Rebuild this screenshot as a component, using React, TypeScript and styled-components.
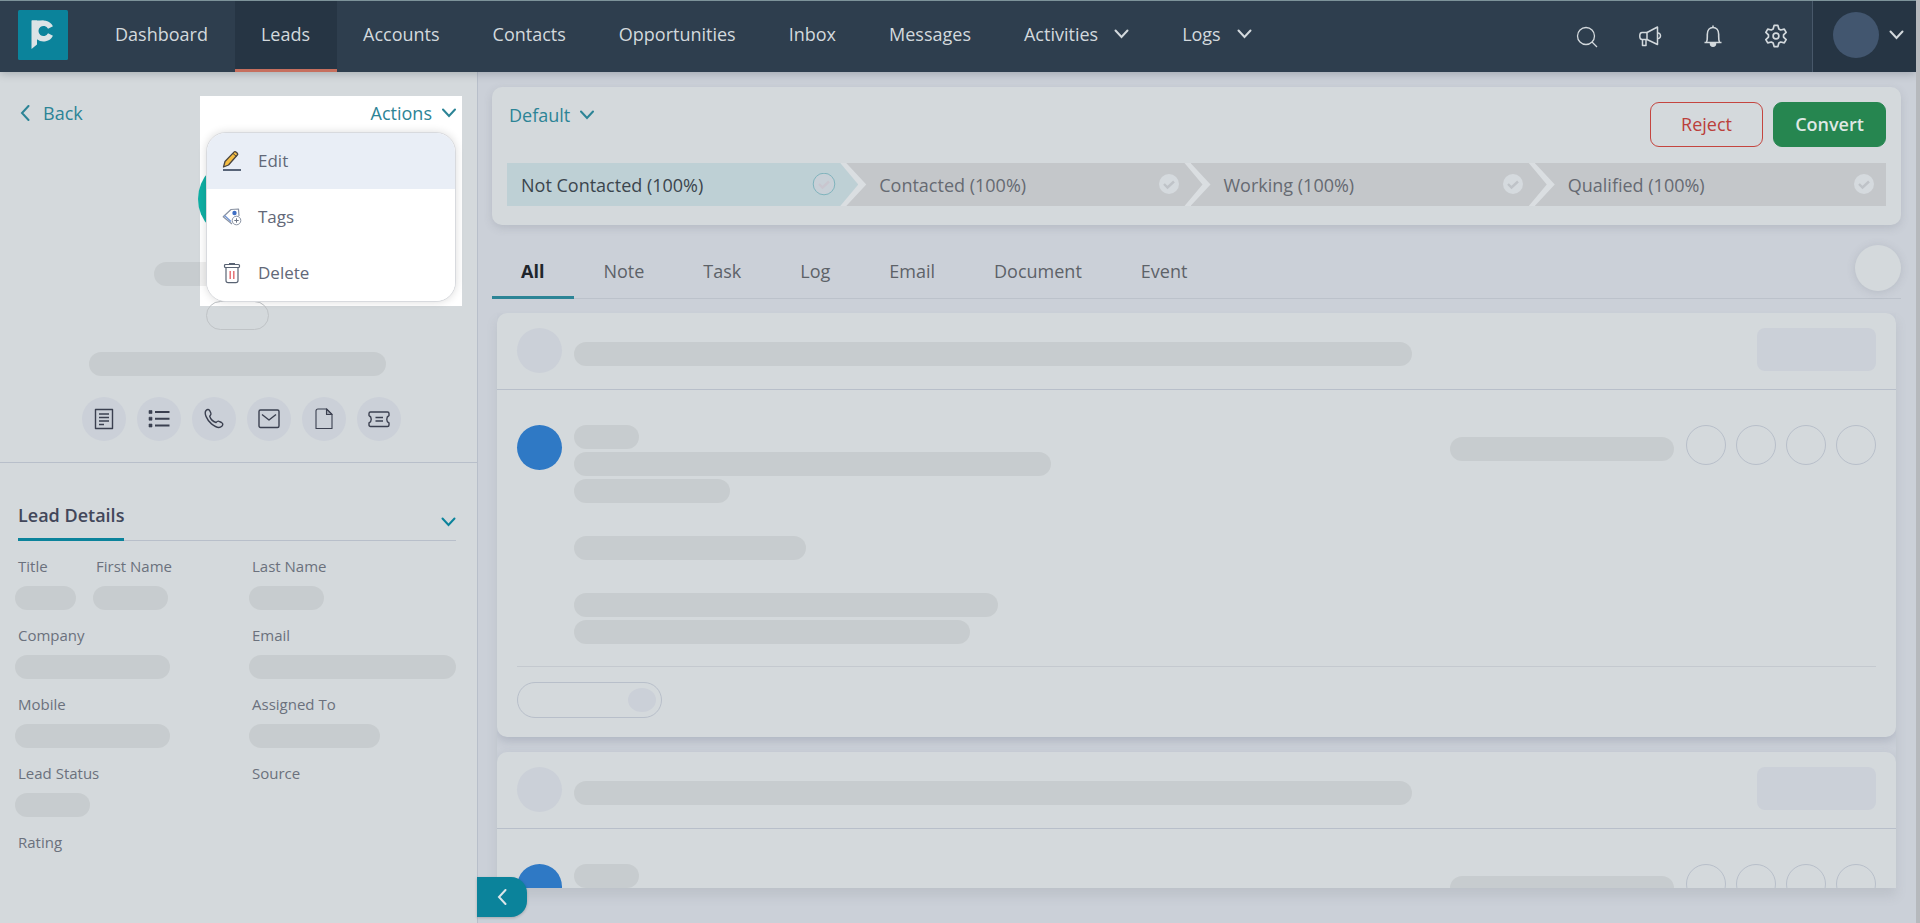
import React from "react";
import styled, { createGlobalStyle, css } from "styled-components";

const color = {
  surface: "#d4d9dc",
  canvas: "#cbd0d8",
  line: "#b8bfca",
  navy: "#2e3e4e",
  navyDark: "#263544",
  navText: "#d3d9dd",
  teal: "#0b839b",
  tealText: "#2c8496",
  skeleton: "rgba(0, 0, 0, 0.06)",
};

const GlobalStyle = createGlobalStyle`
  *, *::before, *::after { box-sizing: border-box; }
  body { margin: 0; background: ${color.canvas}; }
  button, select, a { font: inherit; color: inherit; }
  button { border: 0; padding: 0; background: none; cursor: pointer; }
  a { text-decoration: none; }
  svg { display: block; flex: none; }
`;

const Page = styled.div`
  display: flex;
  flex-direction: column;
  height: 100vh;
  overflow: hidden;
  border-right: 4px solid #b6b9bd;
  background: ${color.canvas};
  font-family: "Open Sans", "Noto Sans", sans-serif;
  font-size: 18px;
  line-height: 24px;
`;

/* ---------- Header ---------- */

const Header = styled.header`
  position: relative;
  z-index: 3;
  display: flex;
  align-items: stretch;
  height: 72px;
  flex: none;
  border-top: 1px solid #7d939a;
  background: ${color.navy};
  color: ${color.navText};
  box-shadow: 0 2px 8px rgba(40, 50, 65, 0.25);
`;

const LogoLink = styled.a`
  margin: 9px 21px 0 18px;
`;

const Nav = styled.nav`
  display: flex;
  flex: 1;
`;

const NavLink = styled.a<{ $active?: boolean }>`
  display: flex;
  align-items: center;
  gap: 16px;
  padding: 0 27px 2px 26px;
  border-bottom: 3px solid transparent;
  font-weight: 500;
  ${(p) =>
    p.$active &&
    css`
      background: ${color.navyDark};
      border-bottom-color: #c66f5e;
    `}
`;

const HeaderTools = styled.div`
  display: flex;
  align-items: center;
  gap: 39px;
  padding: 0 24px 2px 0;
`;

const ToolButton = styled.button`
  display: grid;
  place-items: center;
  width: 24px;
  height: 24px;
`;

const AccountButton = styled.button`
  display: flex;
  align-items: center;
  gap: 10px;
  width: 104px;
  padding: 0 0 4px 20px;
  border-left: 1px solid #48586a;
  background: ${color.navyDark};
`;

const Circle = styled.span<{ $size: number; $bg?: string; $outlined?: boolean }>`
  display: block;
  flex: none;
  width: ${(p) => p.$size}px;
  height: ${(p) => p.$size}px;
  border-radius: 50%;
  background: ${(p) => p.$bg ?? "transparent"};
  border: ${(p) => (p.$outlined ? `1px solid ${color.line}` : "0")};
`;

/* ---------- Sidebar ---------- */

const Body = styled.div`
  display: flex;
  flex: 1;
  min-height: 0;
`;

const Sidebar = styled.aside`
  position: relative;
  width: 478px;
  flex: none;
  border-right: 1px solid ${color.line};
  background: ${color.surface};
`;

const TopBar = styled.div`
  display: flex;
  justify-content: space-between;
  padding: 29px 21px 0 20px;
  color: ${color.tealText};
`;

const TextButton = styled.button<{ $gap: number }>`
  position: relative;
  z-index: 1;
  display: flex;
  align-items: center;
  gap: ${(p) => p.$gap}px;
`;

const ActionsArea = styled.div`
  position: relative;
`;

const Spotlight = styled.div`
  position: absolute;
  z-index: 0;
  top: -5px;
  right: -6px;
  width: 262px;
  height: 210px;
  background: #fff;
`;

const Menu = styled.div`
  position: absolute;
  z-index: 2;
  top: 31px;
  right: 0;
  width: 250px;
  overflow: hidden;
  border: 1px solid #d8dade;
  border-radius: 20px;
  background: #fff;
  box-shadow: 0 0 8px rgba(0, 0, 0, 0.14);
`;

const MenuItem = styled.button<{ $hovered?: boolean }>`
  display: flex;
  align-items: center;
  gap: 16px;
  width: 100%;
  height: 56px;
  padding-left: 15px;
  background: ${(p) => (p.$hovered ? "#e9eef6" : "#fff")};
  color: #626878;
  font-size: 17px;
`;

const Profile = styled.section`
  position: relative;
  z-index: 1;
  display: flex;
  flex-direction: column;
  align-items: center;
  padding: 34px 2px 21px 0;
  border-bottom: 1px solid ${color.line};
`;

const Skeleton = styled.span<{ $w: string }>`
  display: block;
  width: ${(p) => p.$w};
  height: 24px;
  max-width: 100%;
  border-radius: 12px;
  background: ${color.skeleton};
`;

const NameBlock = styled.div`
  display: flex;
  flex-direction: column;
  align-items: center;
  gap: 15px;
  padding: 23px 0 22px;
`;

const StatusPill = styled.span`
  width: 63px;
  height: 29px;
  border: 1px solid #bfc3c6;
  border-radius: 15px;
`;

const QuickActions = styled.div`
  display: flex;
  gap: 11px;
  padding: 21px 0 0 7px;
`;

const QuickAction = styled.button`
  display: grid;
  place-items: center;
  width: 44px;
  height: 44px;
  border-radius: 50%;
  background: ${color.canvas};
  color: #3b4050;
`;

const Details = styled.section`
  padding: 38px 21px 0 18px;
`;

const DetailsHead = styled.div`
  display: flex;
  justify-content: space-between;
  border-bottom: 1px solid ${color.line};
  color: ${color.teal};
`;

const DetailsTitle = styled.h2`
  margin: 0 0 -1px;
  padding: 2px 0 11px;
  border-bottom: 3px solid ${color.teal};
  color: #42475a;
  font-size: 18px;
  font-weight: 600;
  line-height: 24px;
`;

const DetailsToggle = styled.button`
  padding-top: 2px;
`;

const FieldGrid = styled.dl`
  display: grid;
  grid-template-columns: 78px 156px 1fr;
  grid-auto-rows: 69px;
  margin: 0;
  padding-top: 15px;
`;

const Field = styled.div<{ $wide?: boolean }>`
  grid-column: span ${(p) => (p.$wide ? 2 : 1)};
`;

const FieldLabel = styled.dt`
  color: #6b717d;
  font-size: 15px;
  line-height: 20px;
`;

const FieldValue = styled.dd`
  margin: 10px 0 0 -3px;
`;

/* ---------- Main ---------- */

const Main = styled.main`
  display: flex;
  flex-direction: column;
  flex: 1;
  min-width: 0;
  padding: 15px 15px 35px 14px;
`;

const PipelineCard = styled.section`
  padding: 15px 15px 19px;
  border-radius: 10px;
  background: ${color.surface};
  box-shadow: 0 3px 8px rgba(90, 95, 110, 0.18);
`;

const PipelineHead = styled.div`
  display: flex;
  justify-content: space-between;
  height: 61px;
`;

const PipelinePicker = styled.label`
  display: flex;
  align-items: center;
  gap: 9px;
  height: 26px;
  padding-left: 2px;
  color: ${color.tealText};
`;

const PipelineSelect = styled.select`
  appearance: none;
  padding: 0;
  border: 0;
  background: none;
`;

const ButtonRow = styled.div`
  display: flex;
  gap: 10px;
`;

const DecisionButton = styled.button<{ $filled?: boolean }>`
  width: 113px;
  height: 45px;
  padding-bottom: 1px;
  border: 1px solid ${(p) => (p.$filled ? "#268650" : "#c4453f")};
  border-radius: 9px;
  background: ${(p) => (p.$filled ? "#268650" : "transparent")};
  color: ${(p) => (p.$filled ? "#dfe8e4" : "#bb3f3b")};
  font-weight: ${(p) => (p.$filled ? 600 : 500)};
`;

const Stages = styled.ol`
  display: flex;
  margin: 0;
  padding: 0;
  background: #dadee1;
  list-style: none;
`;

const Stage = styled.li<{ $first?: boolean; $last?: boolean }>`
  display: flex;
  align-items: center;
  justify-content: space-between;
  flex: 1 1 ${(p) => (p.$first || p.$last ? 351 : 356)}px;
  height: 43px;
  margin-left: ${(p) => (p.$first ? 0 : -12)}px;
  padding: 0 ${(p) => (p.$last ? 10 : 22)}px 0 ${(p) => (p.$first ? 14 : 33)}px;
  background: ${(p) => (p.$first ? "#bed0d5" : "#c4c7ca")};
  color: ${(p) => (p.$first ? "#3b454d" : "#666a72")};
  clip-path: ${(p) =>
    p.$first
      ? "polygon(0 0, calc(100% - 18px) 0, 100% 50%, calc(100% - 18px) 100%, 0 100%)"
      : p.$last
        ? "polygon(0 0, 100% 0, 100% 100%, 0 100%, 20px 50%)"
        : "polygon(0 0, calc(100% - 18px) 0, 100% 50%, calc(100% - 18px) 100%, 0 100%, 20px 50%)"};
`;

const TabBar = styled.div`
  display: flex;
  justify-content: space-between;
  margin-top: 20px;
  border-bottom: 1px solid #bcc2cb;
`;

const Tabs = styled.div`
  display: flex;
`;

const Tab = styled.button<{ $active?: boolean }>`
  height: 54px;
  margin-bottom: -1px;
  padding: 0 30px 0 29px;
  border-bottom: 3px solid ${(p) => (p.$active ? color.tealText : "transparent")};
  color: ${(p) => (p.$active ? "#20252b" : "#5d6268")};
  font-weight: ${(p) => (p.$active ? 700 : 400)};
`;

const RoundButton = styled.button`
  width: 46px;
  height: 46px;
  border-radius: 50%;
  background: ${color.surface};
  box-shadow: 0 1px 8px rgba(90, 95, 110, 0.18);
`;

const Feed = styled.div`
  display: flex;
  flex-direction: column;
  gap: 15px;
  flex: 1;
  min-height: 0;
  margin: 14px 5px 0;
  overflow: hidden;
  box-shadow: 0 8px 10px rgba(120, 125, 130, 0.16);
`;

const FeedCard = styled.article`
  flex: none;
  border-radius: 10px;
  background: ${color.surface};
  box-shadow: 0 4px 10px rgba(80, 90, 120, 0.22);
`;

const FeedHead = styled.div`
  display: flex;
  gap: 12px;
  height: 77px;
  padding: 15px 20px 0;
  border-bottom: 1px solid ${color.line};
`;

const FeedTitle = styled.div`
  flex: 1;
  padding-top: 14px;
`;

const Badge = styled.span`
  width: 119px;
  height: 43px;
  border-radius: 8px;
  background: ${color.canvas};
`;

const FeedBody = styled.div`
  display: flex;
  gap: 12px;
  height: 277px;
  padding-top: 35px;
  margin: 0 20px;
  border-bottom: 1px solid #c4c9cf;
`;

const Lines = styled.div`
  flex: 1;
`;

const Paragraph = styled.div`
  display: flex;
  flex-direction: column;
  gap: 3px;
  margin-bottom: 33px;
`;

const FeedMeta = styled.div`
  display: flex;
  gap: 10px;
`;

const MetaText = styled.div`
  padding: 12px 2px 0 0;
`;

const FeedFoot = styled.div`
  padding: 15px 20px 19px;
`;

const Reply = styled.div`
  display: flex;
  align-items: center;
  justify-content: flex-end;
  width: 145px;
  height: 36px;
  padding-right: 5px;
  border: 1px solid ${color.line};
  border-radius: 18px;
`;

const ReplyChip = styled.span`
  width: 28px;
  height: 24px;
  border-radius: 50%;
  background: ${color.canvas};
`;

const CollapseButton = styled.button`
  position: absolute;
  z-index: 2;
  left: 100%;
  bottom: 6px;
  display: grid;
  place-items: center;
  width: 50px;
  height: 40px;
  border-radius: 0 16px 16px 0;
  background: ${color.teal};
  color: #dce6e9;
  box-shadow: 0 1px 3px rgba(0, 0, 0, 0.2);
`;

/* ---------- Icons ---------- */

type ChevronProps = { dir?: "down" | "left"; w?: number };

const Chevron = ({ dir = "down", w = 14 }: ChevronProps) =>
  dir === "down" ? (
    <svg width={w} height={10} viewBox="0 0 14 10" fill="none" stroke="currentColor" strokeWidth={2} aria-hidden>
      <path d="M1 1.5 7 8l6-6.500" strokeLinecap="round" />
    </svg>
  ) : (
    <svg width={10} height={16} viewBox="0 0 10 16" fill="none" stroke="currentColor" strokeWidth={2} aria-hidden>
      <path d="M8.500 1 2 8l6.500 7" strokeLinecap="round" />
    </svg>
  );

const Logo = () => (
  <svg width={50} height={50} viewBox="0 0 50 50" aria-hidden>
    <rect width={50} height={50} rx={1.5} fill="#0b839b" />
    <path d="M13.500 10.500h5.500v24l-5.500 4.500z" fill="#dbe3e6" />
    <path d="M14 13h11.500" stroke="#dbe3e6" strokeWidth={5} />
    <path d="M32.500 17.500A7.800 7.800 0 1 0 32.500 24.500" fill="none" stroke="#dbe3e6" strokeWidth={5.500} />
  </svg>
);

const SearchIcon = () => (
  <svg width={24} height={24} viewBox="0 0 24 24" fill="none" stroke="currentColor" strokeWidth={1.3} aria-hidden>
    <circle cx={11} cy={12} r={8.500} />
    <path d="m17 18 5 5" />
  </svg>
);

const MegaphoneIcon = () => (
  <svg width={24} height={24} viewBox="0 0 24 24" fill="none" stroke="currentColor" strokeWidth={1.5} strokeLinejoin="round" aria-hidden>
    <path d="M4 8.500h5v7H4c-3 0-3-7 0-7z" />
    <path d="m9 8.500 10.500-5.500v17.500L9 15.500" />
    <path d="M4.500 15.500v6h3.500v-6M19.500 9c4-.5 4 6 0 5.500" />
  </svg>
);

const BellIcon = () => (
  <svg width={24} height={24} viewBox="0 0 24 24" fill="none" stroke="currentColor" strokeWidth={1.6} strokeLinejoin="round" aria-hidden>
    <path d="M3.500 18.500h17M5.500 18c1-1.500.8-3 .8-7.500 0-4.500 2.500-7 5.700-7s5.700 2.500 5.700 7c0 4.500-.2 6 .8 7.500M12 3.500v-2" />
    <path d="M9.500 19.500h5c0 3.500-5 3.500-5 0z" fill="currentColor" />
  </svg>
);

const gearPath = (() => {
  const pts: string[] = [];
  for (let i = 0; i < 6; i++) {
    const a = (i * 60 - 90) * (Math.PI / 180);
    [[-22, 7.600], [-10, 10.800], [10, 10.800], [22, 7.600]].forEach(([d, r]) => {
      const t = a + (d * Math.PI) / 180;
      pts.push(`${(12 + r * Math.cos(t)).toFixed(2)} ${(12 + r * Math.sin(t)).toFixed(2)}`);
    });
  }
  return `M${pts.join("L")}Z`;
})();

const GearIcon = () => (
  <svg width={24} height={24} viewBox="0 0 24 24" fill="none" stroke="currentColor" strokeWidth={1.7} strokeLinejoin="round" aria-hidden>
    <path d={gearPath} />
    <circle cx={12} cy={12} r={2.900} />
  </svg>
);

const PencilIcon = () => (
  <svg width={20} height={20} viewBox="0 0 20 20" aria-hidden>
    <path d="M1.500 16 3 10.500 12.200.900c1-.900 4.200 1.500 3.300 2.900L6.500 14z" fill="#f5bd42" stroke="#4a4540" strokeWidth={1.3} strokeLinejoin="round" />
    <path d="m11 2.500 3.500 3" stroke="#4a4540" />
    <path d="M1 19h18" stroke="#27364e" strokeWidth={1.4} />
  </svg>
);

const TagIcon = () => (
  <svg width={20} height={20} viewBox="0 0 20 20" fill="none" aria-hidden>
    <path d="M10 17 1.200 9.800 9 2.500l7.500-.5.500 7" stroke="#8a93a3" strokeWidth={1.200} strokeLinejoin="round" />
    <path d="m2.500 8.500 6.500 6" stroke="#6f94d6" strokeWidth={1.200} />
    <circle cx={12.500} cy={6} r={2.200} fill="#3f6fc4" />
    <circle cx={14.500} cy={13.500} r={4.300} fill="#fff" stroke="#8a93a3" />
    <path d="M14.500 11.300v4.400M12.300 13.500h4.400" stroke="#6b7484" />
  </svg>
);

const TrashIcon = () => (
  <svg width={20} height={22} viewBox="0 0 20 22" fill="none" stroke="#596373" strokeWidth={1.200} aria-hidden>
    <path d="M7 1.500h6" />
    <rect x={2.500} y={2.500} width={15} height={3} rx={1} />
    <path d="M4 5.500v13c0 1.500.7 2.200 2.200 2.200h7.600c1.500 0 2.200-.7 2.200-2.200v-13" />
    <path d="M8.200 9v8M11.800 9v8" stroke="#e2666a" strokeWidth={1.400} />
  </svg>
);

const Glyph = ({ children }: { children: React.ReactNode }) => (
  <svg width={22} height={22} viewBox="0 0 22 22" fill="none" stroke="currentColor" strokeWidth={1.400} strokeLinejoin="round" aria-hidden>
    {children}
  </svg>
);

const quickActions = [
  {
    label: "Add note",
    icon: (
      <>
        <path d="M2.500 1.500h17v19h-17z" />
        <path d="M6 6h10M6 9.500h10M6 13h10M6 16.500h5" />
      </>
    ),
  },
  {
    label: "Add task",
    icon: (
      <>
        <path d="M7 4h14.500M7 10.700h14.500M7 17.500h14.500" strokeWidth={1.900} />
        <path d="M1 2.500h3v3H1zM1 9.200h3v3H1zM1 16h3v3H1z" fill="currentColor" strokeWidth={0.600} />
      </>
    ),
  },
  {
    label: "Log call",
    icon: (
      <path d="M3 2.500c1.500-1.600 3-1.200 3.800.3l1.100 2.400c.5 1-.1 1.800-1.200 3 .8 2.600 3.500 5.300 6.300 6.300 1.200-1.300 2-1.800 3.100-1.200l2.400 1.200c1.600.9 1.700 2.200.3 3.700-2.100 2-6 1.200-10.300-2.300C3.700 11.700.8 5.200 3 2.500z" />
    ),
  },
  {
    label: "Send email",
    icon: (
      <>
        <rect x={1} y={2} width={20} height={17.500} rx={1.500} />
        <path d="m4 6.500 7 5.500 7-5.500" />
      </>
    ),
  },
  {
    label: "Add document",
    icon: (
      <>
        <path d="M13.500 1H5C3.800 1 3 1.800 3 3v17.500h16V6.500L13.500 1z" strokeWidth={1.100} />
        <path d="M13.500 1v5.500H19z" fill="#9da2ae" strokeWidth={1.100} />
      </>
    ),
  },
  {
    label: "Add event",
    icon: (
      <>
        <path d="M2.500 4h17c.9 0 1.500.6 1.500 1.500v2c-3 1.500-3 6 0 7.500v2c0 .9-.6 1.500-1.500 1.500h-17C1.600 18.500 1 17.900 1 17v-2c3-1.500 3-6 0-7.500v-2C1 4.600 1.600 4 2.500 4z" />
        <path d="M7.500 9.500h7.500M7.500 13h7.500" />
      </>
    ),
  },
];

const CheckMark = ({ active }: { active?: boolean }) => (
  <svg width={24} height={24} viewBox="0 0 24 24" fill="none" aria-hidden>
    <circle cx={12} cy={11} r={active ? 10.800 : 10} fill={active ? "#c8d0d7" : "#d5dade"} stroke={active ? "#7fb3bc" : "none"} />
    <path d="m7 11 3.500 3.500L17 8.500" stroke={active ? "#c9c6cf" : "#bfc3c8"} strokeWidth={2.400} />
  </svg>
);

/* ---------- Content ---------- */

const navItems = [
  { label: "Dashboard" },
  { label: "Leads", active: true },
  { label: "Accounts" },
  { label: "Contacts" },
  { label: "Opportunities" },
  { label: "Inbox" },
  { label: "Messages" },
  { label: "Activities", menu: true },
  { label: "Logs", menu: true },
];

const tools = [
  { label: "Search", icon: <SearchIcon /> },
  { label: "Announcements", icon: <MegaphoneIcon /> },
  { label: "Notifications", icon: <BellIcon /> },
  { label: "Settings", icon: <GearIcon /> },
];

const fields = [
  { label: "Title", w: "61px" },
  { label: "First Name", w: "75px" },
  { label: "Last Name", w: "75px" },
  { label: "Company", w: "155px", wide: true },
  { label: "Email", w: "207px" },
  { label: "Mobile", w: "155px", wide: true },
  { label: "Assigned To", w: "131px" },
  { label: "Lead Status", w: "75px", wide: true },
  { label: "Source" },
  { label: "Rating", wide: true },
];

const stages = ["Not Contacted (100%)", "Contacted (100%)", "Working (100%)", "Qualified (100%)"];
const tabs = ["All", "Note", "Task", "Log", "Email", "Document", "Event"];
const paragraphs = [["65px", "477px", "156px"], ["232px"], ["424px", "396px"]];

const FeedEntry = () => (
  <FeedCard>
    <FeedHead>
      <Circle $size={45} $bg={color.canvas} />
      <FeedTitle>
        <Skeleton $w="838px" />
      </FeedTitle>
      <Badge />
    </FeedHead>
    <FeedBody>
      <Circle $size={45} $bg="#2f79c5" />
      <Lines>
        {paragraphs.map((lines, i) => (
          <Paragraph key={i}>
            {lines.map((w) => (
              <Skeleton key={w} $w={w} />
            ))}
          </Paragraph>
        ))}
      </Lines>
      <FeedMeta>
        <MetaText>
          <Skeleton $w="224px" />
        </MetaText>
        {[0, 1, 2, 3].map((n) => (
          <Circle key={n} $size={40} $outlined />
        ))}
      </FeedMeta>
    </FeedBody>
    <FeedFoot>
      <Reply>
        <ReplyChip />
      </Reply>
    </FeedFoot>
  </FeedCard>
);

export default function App() {
  return (
    <Page>
      <GlobalStyle />
      <Header>
        <LogoLink href="#" aria-label="Home">
          <Logo />
        </LogoLink>
        <Nav>
          {navItems.map((item) => (
            <NavLink key={item.label} href="#" $active={item.active}>
              {item.label}
              {item.menu && <Chevron w={15} />}
            </NavLink>
          ))}
        </Nav>
        <HeaderTools>
          {tools.map((tool) => (
            <ToolButton key={tool.label} aria-label={tool.label}>
              {tool.icon}
            </ToolButton>
          ))}
        </HeaderTools>
        <AccountButton aria-label="Account">
          <Circle $size={46} $bg="#42566f" />
          <Chevron w={15} />
        </AccountButton>
      </Header>

      <Body>
        <Sidebar>
          <TopBar>
            <TextButton $gap={13}>
              <Chevron dir="left" />
              Back
            </TextButton>
            <ActionsArea>
              <Spotlight />
              <TextButton $gap={10} aria-haspopup="menu" aria-expanded>
                Actions
                <Chevron />
              </TextButton>
              <Menu role="menu">
                <MenuItem role="menuitem" $hovered>
                  <PencilIcon />
                  Edit
                </MenuItem>
                <MenuItem role="menuitem">
                  <TagIcon />
                  Tags
                </MenuItem>
                <MenuItem role="menuitem">
                  <TrashIcon />
                  Delete
                </MenuItem>
              </Menu>
            </ActionsArea>
          </TopBar>

          <Profile>
            <Circle $size={80} $bg="#0fafa4" />
            <NameBlock>
              <Skeleton $w="168px" />
              <StatusPill />
            </NameBlock>
            <Skeleton $w="297px" />
            <QuickActions>
              {quickActions.map((a) => (
                <QuickAction key={a.label} aria-label={a.label}>
                  <Glyph>{a.icon}</Glyph>
                </QuickAction>
              ))}
            </QuickActions>
          </Profile>

          <Details>
            <DetailsHead>
              <DetailsTitle>Lead Details</DetailsTitle>
              <DetailsToggle aria-label="Toggle lead details">
                <Chevron w={15} />
              </DetailsToggle>
            </DetailsHead>
            <FieldGrid>
              {fields.map((f) => (
                <Field key={f.label} $wide={f.wide}>
                  <FieldLabel>{f.label}</FieldLabel>
                  <FieldValue>{f.w && <Skeleton $w={f.w} />}</FieldValue>
                </Field>
              ))}
            </FieldGrid>
          </Details>
          <CollapseButton aria-label="Collapse sidebar">
            <Chevron dir="left" />
          </CollapseButton>
        </Sidebar>

        <Main>
          <PipelineCard>
            <PipelineHead>
              <PipelinePicker>
                <PipelineSelect aria-label="Pipeline">
                  <option>Default</option>
                </PipelineSelect>
                <Chevron />
              </PipelinePicker>
              <ButtonRow>
                <DecisionButton>Reject</DecisionButton>
                <DecisionButton $filled>Convert</DecisionButton>
              </ButtonRow>
            </PipelineHead>
            <Stages>
              {stages.map((s, i) => (
                <Stage key={s} $first={i === 0} $last={i === stages.length - 1}>
                  {s}
                  <CheckMark active={i === 0} />
                </Stage>
              ))}
            </Stages>
          </PipelineCard>

          <TabBar>
            <Tabs role="tablist">
              {tabs.map((t, i) => (
                <Tab key={t} role="tab" aria-selected={i === 0} $active={i === 0}>
                  {t}
                </Tab>
              ))}
            </Tabs>
            <RoundButton aria-label="More options" />
          </TabBar>

          <Feed>
            <FeedEntry />
            <FeedEntry />
          </Feed>
        </Main>
      </Body>
    </Page>
  );
}
